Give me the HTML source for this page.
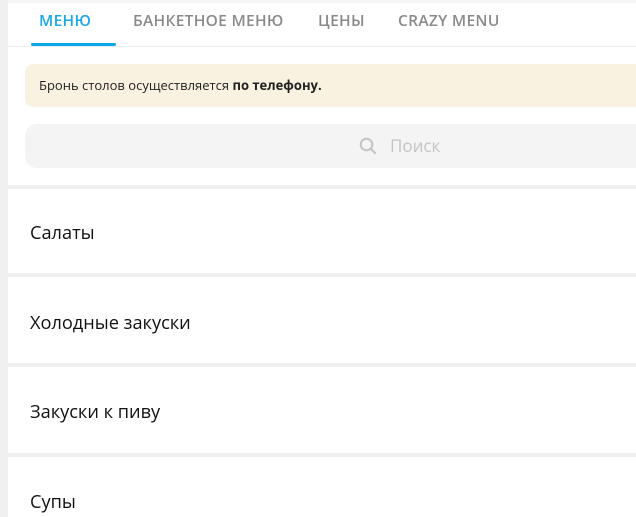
<!DOCTYPE html>
<html><head><meta charset="utf-8"><style>
body{margin:0;width:636px;height:512px;overflow:hidden;background:#f0f0f0;font-family:"Open Sans","Liberation Sans","DejaVu Sans",sans-serif;}
.card{position:absolute;left:8px;top:3px;width:640px;height:182px;background:#fff;}
.tabs{position:absolute;left:0;top:0;width:640px;height:43px;border-bottom:1px solid #ececec;}
.tab{position:absolute;top:6px;font-size:15.5px;font-weight:600;color:#8a8a8a;letter-spacing:0.3px;}
.ul{position:absolute;left:23px;top:40px;width:85px;height:3px;background:#0aa8e8;border-radius:2px;}
.note{position:absolute;left:17px;top:61px;width:640px;height:43px;background:#faf2e1;border-radius:8px;font-size:13px;color:#222;line-height:43px;padding-left:14px;box-sizing:border-box;}
.search{position:absolute;left:17px;top:121px;width:640px;height:44px;background:#f4f4f4;border-radius:12px;}
.search span{position:absolute;left:365px;top:10px;font-size:17px;color:#c4c4c4;}
.item{position:absolute;left:8px;width:640px;height:84px;background:#fff;}
.item span{position:absolute;left:22px;font-size:18.2px;color:#111;}
</style></head><body>
<div style="position:absolute;left:8px;top:0;width:640px;height:3px;background:#f6f6f6"></div>
<div class="card">
<div class="tabs">
<div class="tab" style="left:31px;color:#19a9e6">МЕНЮ</div>
<div class="tab" style="left:125px">БАНКЕТНОЕ МЕНЮ</div>
<div class="tab" style="left:310px">ЦЕНЫ</div>
<div class="tab" style="left:390px">CRAZY MENU</div>
<div class="ul"></div>
</div>
<div class="note">Бронь столов осуществляется <b>по телефону.</b></div>
<div class="search">
<svg style="position:absolute;left:334px;top:13px" width="18" height="18" viewBox="0 0 18 18"><circle cx="7.5" cy="7.5" r="5.8" fill="none" stroke="#c4c4c4" stroke-width="2"/><line x1="11.8" y1="11.8" x2="16" y2="16" stroke="#c4c4c4" stroke-width="2.2" stroke-linecap="round"/></svg>
<span>Поиск</span></div>
</div>
<div class="item" style="top:189px"><span style="top:32px">Салаты</span></div>
<div class="item" style="top:277px;height:86px"><span style="top:34px">Холодные закуски</span></div>
<div class="item" style="top:367px;height:86px"><span style="top:33px">Закуски к пиву</span></div>
<div class="item" style="top:457px;height:60px"><span style="top:33px">Супы</span></div>
</body></html>
